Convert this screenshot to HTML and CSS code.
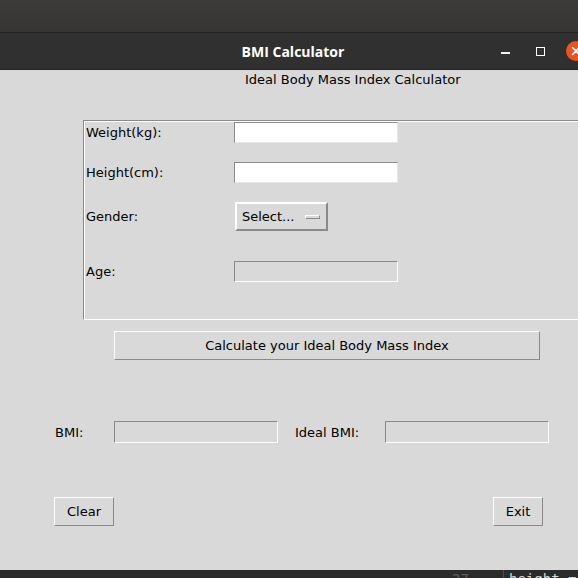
FILE: index.html
```html
<!DOCTYPE html>
<html>
<head>
<meta charset="utf-8">
<link rel="stylesheet" href="styles.css">
</head>
<body>
<div class="desk-top"></div>
<div class="titlebar">
  <div class="tb-spacer"></div>
  <div class="tb-title">BMI Calculator</div>
  <div class="tb-controls">
    <span class="ctl-min"></span>
    <span class="ctl-max"></span>
    <span class="ctl-close"><svg width="20" height="20" viewBox="0 0 20 20"><path d="M6.5 6.5 L13.5 13.5 M13.5 6.5 L6.5 13.5" stroke="#fff" stroke-width="1.6" stroke-linecap="round"/></svg></span>
  </div>
</div>
<div class="window">
  <div class="subtitle">Ideal Body Mass Index Calculator</div>
  <div class="frame">
    <div class="row r1"><span class="lbl">Weight(kg):</span><span class="entry"></span></div>
    <div class="row r2"><span class="lbl">Height(cm):</span><span class="entry"></span></div>
    <div class="row r3"><span class="lbl">Gender:</span><span class="select"><span class="sel-text">Select...</span><span class="sel-ind"></span></span></div>
    <div class="row r4"><span class="lbl">Age:</span><span class="entry ro"></span></div>
  </div>
  <div class="btn calc">Calculate your Ideal Body Mass Index</div>
  <div class="result-row">
    <span class="res-lbl bmi">BMI:</span>
    <span class="entry ro res-entry"></span>
    <span class="res-lbl ideal">Ideal BMI:</span>
    <span class="entry ro res-entry"></span>
  </div>
  <div class="action-row">
    <div class="btn clear">Clear</div>
    <div class="btn exit">Exit</div>
  </div>
</div>
<div class="editor-strip">
  <span class="ln">27</span>
  <span class="code">height = </span>
</div>
</body>
</html>
```
FILE: styles.css
```css
html, body {
  margin: 0;
  padding: 0;
  width: 578px;
  height: 578px;
  overflow: hidden;
  background: #d9d9d9;
  font-family: "DejaVu Sans", sans-serif;
  font-size: 13px;
  color: #000;
}

.desk-top {
  height: 32px;
  background: linear-gradient(#3c3b39, #363533);
  border-bottom: 1px solid #232323;
}

.titlebar {
  height: 36px;
  display: grid;
  grid-template-columns: 1fr auto 1fr;
  align-items: center;
  background: #303030;
  border-bottom: 1px solid #262626;
  color: #fff;
  overflow: hidden;
}

.tb-title {
  font-family: "Open Sans", sans-serif;
  font-weight: bold;
  font-size: 14px;
  padding-left: 8px;
}

.tb-controls {
  display: flex;
  align-items: center;
  justify-content: flex-end;
  margin-right: -8px;
}

.ctl-min {
  width: 9px;
  height: 2px;
  background: #f0f0f0;
  margin-top: 4px;
}

.ctl-max {
  width: 7px;
  height: 7px;
  border: 1px solid #fff;
  margin-left: 26px;
}

.ctl-close {
  width: 20px;
  height: 20px;
  border-radius: 50%;
  background: #e95420;
  margin-left: 21px;
  display: flex;
}

.window {
  height: 500px;
  background: #d9d9d9;
  overflow: hidden;
}

.subtitle {
  height: 20px;
  line-height: 20px;
  padding-left: 245px;
}

.frame {
  margin: 30px 0 0 83px;
  width: 520px;
  height: 200px;
  box-sizing: border-box;
  border-top: 1px solid #8a8a8a;
  border-left: 1px solid #8a8a8a;
  border-bottom: 1px solid #fff;
  box-shadow: inset 1px 1px 0 #fff;
  padding: 1px 0 0 2px;
  display: flex;
  flex-direction: column;
}

.row {
  display: grid;
  grid-template-columns: 148px 164px;
  align-items: center;
}

.r1 { height: 21px; }
.r2 { height: 21px; margin-top: 19px; }
.r3 { height: 29px; margin-top: 19px; }
.r4 { height: 21px; margin-top: 30px; }

.entry {
  display: block;
  height: 21px;
  box-sizing: border-box;
  background: #fff;
  border-top: 1px solid #8a8a8a;
  border-left: 1px solid #8a8a8a;
  border-bottom: 1px solid #e6e6e6;
  border-right: 1px solid #e6e6e6;
}

.entry.ro {
  background: #d9d9d9;
  border-bottom-color: #fff;
  border-right-color: #fff;
}

.select {
  margin-left: 1px;
  width: 93px;
  height: 29px;
  box-sizing: border-box;
  border: 2px solid;
  border-color: #fff #8a8a8a #8a8a8a #fff;
  display: flex;
  align-items: center;
  justify-content: space-between;
  padding: 0 6px 0 5px;
}

.sel-ind {
  width: 15px;
  height: 4px;
  box-sizing: border-box;
  border: 1px solid;
  border-color: #fff #8a8a8a #8a8a8a #fff;
  background: #d9d9d9;
}

.btn {
  box-sizing: border-box;
  height: 29px;
  border: 1px solid;
  border-color: #fff #8a8a8a #8a8a8a #fff;
  display: flex;
  align-items: center;
  justify-content: center;
}

.calc {
  margin: 11px 0 0 114px;
  width: 426px;
}

.result-row {
  margin-top: 61px;
  height: 22px;
  display: flex;
  align-items: center;
  padding-left: 55px;
}

.res-lbl.bmi { width: 59px; }
.res-lbl.ideal { width: 90px; margin-left: 17px; }
.res-entry { width: 164px; height: 22px; }

.action-row {
  margin-top: 54px;
  display: flex;
  justify-content: space-between;
  padding: 0 35px 0 54px;
}

.clear { width: 60px; }
.exit { width: 50px; }

.editor-strip {
  height: 8px;
  background: #2b2b2b;
  display: flex;
  overflow: hidden;
  font-family: "DejaVu Sans Mono", monospace;
  font-size: 14px;
  line-height: 14px;
}

.ln {
  width: 52px;
  margin-left: 452px;
  padding-top: 2px;
  color: #5c5c5c;
  border-right: 1px solid #4a4a4a;
  box-sizing: border-box;
}

.code {
  padding-left: 5px;
  padding-top: 2px;
  color: #d8d8d8;
}
```
